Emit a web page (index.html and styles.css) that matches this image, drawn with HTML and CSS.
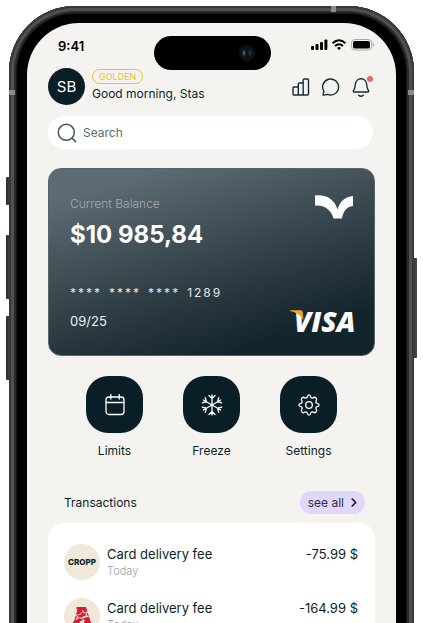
FILE: index.html
```html
<!DOCTYPE html>
<html lang="en">
<head>
<meta charset="utf-8">
<meta name="viewport" content="width=device-width, initial-scale=1">
<title>Wallet</title>
<link rel="stylesheet" href="styles.css">
</head>
<body>
<div class="stage">
  <div class="phone">
    <span class="key key-mute"></span>
    <span class="key key-up"></span>
    <span class="key key-down"></span>
    <span class="key key-power"></span>
    <div class="frame">
      <span class="band band-left"></span>
      <span class="band band-right"></span>
      <span class="band band-top"></span>
      <div class="screen">
        <div class="status">
          <span class="time">9:41</span>
          <div class="island"><span class="lens"></span></div>
          <svg class="status-icons" width="64" height="12" viewBox="0 0 64 12" aria-hidden="true">
            <rect x="0" y="7" width="3" height="4" rx="1"/><rect x="4.500" y="5" width="3" height="6" rx="1"/><rect x="9" y="3" width="3" height="8" rx="1"/><rect x="13.400" y="0.500" width="3" height="10.500" rx="1"/>
            <path d="M21.500 4.200Q28 -1.600 34.500 4.200" fill="none" stroke="#000" stroke-width="2"/>
            <path d="M24 7Q28 3.400 32 7" fill="none" stroke="#000" stroke-width="1.900"/>
            <path d="M26 8.900Q28 7.300 30 8.900L28 11Z"/>
            <rect x="40.500" y="0.500" width="20" height="10.500" rx="3.200" fill="none" stroke="#a9a9a7"/>
            <rect x="42" y="2" width="17" height="7.500" rx="1.800"/>
            <path d="M61.800 3.800Q63.300 4.300 63.300 5.800T61.800 7.800Z" fill="#a9a9a7"/>
          </svg>
        </div>

        <header class="header">
          <div class="avatar">SB</div>
          <div class="greeting">
            <span class="tier">GOLDEN</span>
            <span class="hello">Good morning, Stas</span>
          </div>
          <nav class="tools">
            <button class="tool" type="button" aria-label="Statistics">
              <svg width="20" height="20" viewBox="0 0 20 20"><path d="M2.600 18H16.500Q17.500 18 17.500 17V3Q17.500 2 16.500 2H13.200Q12.200 2 12.200 3V18M12.200 6H8.300Q7.300 6 7.300 7V18M7.300 10H3Q2 10 2 11V17Q2 18 3 18"/></svg>
            </button>
            <button class="tool" type="button" aria-label="Messages">
              <svg width="20" height="20" viewBox="0 0 20 20"><path d="M3 14.500A8 8 0 1 1 6.600 17.400L2.700 18.100Q1.900 18.200 2.100 17.400Z"/></svg>
            </button>
            <button class="tool" type="button" aria-label="Notifications">
              <svg width="20" height="20" viewBox="0 0 20 20"><path d="M10 1.800C6.800 1.800 4.600 4.200 4.400 7.200C4.200 10.500 3.600 11.800 2.500 13.600Q2 15 3.200 15H16.800Q18 15 17.500 13.600C16.400 11.800 15.800 10.500 15.600 7.200C15.400 4.200 13.200 1.800 10 1.800ZM7.700 18.200Q10 20.200 12.300 18.200"/></svg>
              <span class="dot"></span>
            </button>
          </nav>
        </header>

        <label class="search">
          <svg width="20" height="20" viewBox="0 0 20 20" aria-hidden="true"><circle cx="9.300" cy="9.300" r="8"/><path d="M15 15L18.600 18.600"/></svg>
          <input type="search" placeholder="Search" aria-label="Search">
        </label>

        <section class="card">
          <div class="card-row">
            <div>
              <div class="card-label">Current Balance</div>
              <div class="balance">$10 985,84</div>
            </div>
            <svg class="bird" width="38" height="24" viewBox="0 0 38 24" aria-hidden="true"><path d="M0 .5C11 -1 19.500 4 22.500 14.500C25 6 30 2 38 1V11C31.500 11.500 28 17 27 23.500H18.500C17 16 10 9.500 0 10.500Z" fill="#fff"/></svg>
          </div>
          <div class="card-row card-bottom">
            <div>
              <div class="number"><span>****</span> <span>****</span> <span>****</span> <span>1289</span></div>
              <div class="expiry">09/25</div>
            </div>
            <svg class="visa" width="68" height="28" viewBox="0 0 68 28" role="img" aria-label="VISA">
              <text x="4" y="23">VISA</text>
              <path d="M0 1.200H10.500Q12.600 1.200 12.800 3.200L13.500 11.500Q9.500 3.500 0 2Z" fill="#f9a51a"/>
            </svg>
          </div>
        </section>

        <div class="actions">
          <button class="action" type="button">
            <span class="tile"><svg width="22" height="22" viewBox="0 0 22 22"><rect x="2" y="3" width="18" height="17.500" rx="3"/><path d="M2 8.500H20M6.800 .5V5M15.200 .5V5"/></svg></span>
            Limits
          </button>
          <button class="action" type="button">
            <span class="tile"><svg width="22" height="22" viewBox="0 0 22 22"><path d="M11 11V1M8 1.500L11 4.500L14 1.500"/><path d="M11 11V1M8 1.500L11 4.500L14 1.500" transform="rotate(60 11 11)"/><path d="M11 11V1M8 1.500L11 4.500L14 1.500" transform="rotate(120 11 11)"/><path d="M11 11V1M8 1.500L11 4.500L14 1.500" transform="rotate(180 11 11)"/><path d="M11 11V1M8 1.500L11 4.500L14 1.500" transform="rotate(240 11 11)"/><path d="M11 11V1M8 1.500L11 4.500L14 1.500" transform="rotate(300 11 11)"/></svg></span>
            Freeze
          </button>
          <button class="action" type="button">
            <span class="tile"><svg width="22" height="22" viewBox="0 0 22 22"><circle cx="11" cy="11" r="3.300"/><path d="M9.300 3C9.600 .2 12.400 .2 12.700 3C13 4 14 4.400 15 3.900C17.100 2.200 19.800 4.900 18.100 7C17.600 8 18 9 19 9.300C21.800 9.600 21.800 12.400 19 12.700C18 13 17.600 14 18.100 15C19.800 17.100 17.100 19.800 15 18.100C14 17.600 13 18 12.700 19C12.400 21.800 9.600 21.800 9.300 19C9 18 8 17.600 7 18.100C4.900 19.800 2.200 17.100 3.900 15C4.400 14 4 13 3 12.700C.2 12.400 .2 9.600 3 9.300C4 9 4.400 8 3.900 7C2.200 4.900 4.900 2.200 7 3.900C8 4.400 9 4 9.300 3Z"/></svg></span>
            Settings
          </button>
        </div>

        <div class="section-head">
          <h2>Transactions</h2>
          <a class="see-all" href="#all">see all <svg width="6" height="9" viewBox="0 0 6 9" aria-hidden="true"><path d="M1.200 1L4.700 4.500L1.200 8"/></svg></a>
        </div>

        <ul class="list">
          <li class="item">
            <span class="logo cropp">CROPP</span>
            <div class="what"><div class="title">Card delivery fee</div><div class="when">Today</div></div>
            <span class="amount">-75.99 $</span>
          </li>
          <li class="item">
            <span class="logo"><svg width="20" height="20" viewBox="0 0 20 20" aria-hidden="true"><path d="M4.500 1H14L18.500 15.500H19V17.500H12V15.500H12.800L12.200 13L8 15.500L7.500 17.500H1V15.500H2L5.500 3.500H4.500Z" fill="#d51c35"/><path d="M9.500 6.500L11 3.500L12.200 6.500L17 5L14.500 8.500L17 11L13 11.500L10 13L7 12L3.500 14.500L5 10.500L2.500 9L7 8.500Z" fill="#f0e9da"/><path d="M4 9.500L8 9L10 7L11 5L11.700 7.500L15 6.500L13 8.700L14.800 10.200L11.500 10L9.500 12L7.500 11L5.500 12.500L6.500 10.500Z" fill="#d51c35"/></svg></span>
            <div class="what"><div class="title">Card delivery fee</div><div class="when">Today</div></div>
            <span class="amount">-164.99 $</span>
          </li>
        </ul>
      </div>
    </div>
  </div>
</div>
</body>
</html>
```
FILE: styles.css
```css
* { box-sizing: border-box; }

:root {
  --ink: #0a1f28;
  --paper: #f4f3ef;
}

body {
  margin: 0;
  background: #fff;
  color: var(--ink);
  font-family: "Inter", "Liberation Sans", sans-serif;
  font-size: 13px;
  line-height: 18px;
}

button {
  border: 0;
  padding: 0;
  background: none;
  color: inherit;
  font: inherit;
}

svg { display: block; }

.stage {
  height: 100vh;
  overflow: hidden;
  padding: 6px 9px 0;
}

.phone { position: relative; }

.frame {
  position: relative;
  padding: 17px 18px 40px;
  border-radius: 66px 66px 0 0;
  background: #000;
  box-shadow: inset 0 0 0 2px #3a3937, inset 0 0 0 5px #50504d, inset 0 0 0 7px #2b2a29, inset 0 0 0 8px #161616;
}

.key {
  position: absolute;
  width: 5px;
  border-radius: 1px;
  background: linear-gradient(90deg, #2c2b29, #4d4b48);
}
.key-mute { left: -3px; top: 171px; height: 28px; }
.key-up { left: -3px; top: 229px; height: 64px; }
.key-down { left: -3px; top: 310px; height: 64px; }
.key-power { right: -3px; top: 252px; height: 100px; }

.band { position: absolute; background: #8b8a87; }
.band-left { left: 0; top: 84px; width: 6px; height: 5px; }
.band-right { right: 0; top: 84px; width: 6px; height: 5px; }
.band-top { right: 78px; top: 0; width: 5px; height: 6px; }

.screen {
  padding: 13px 21px 24px;
  border-radius: 52px 52px 0 0;
  background: var(--paper);
}

.status {
  position: relative;
  display: flex;
  justify-content: space-between;
  align-items: center;
  height: 20px;
  padding: 0 0 0 10px;
}
.time { font-weight: 600; color: #000; }
.status-icons { margin-bottom: 2px; }

.island {
  position: absolute;
  left: 50%;
  top: 0;
  width: 117px;
  height: 34px;
  margin-left: -58px;
  border-radius: 17px;
  background: #000;
}
.lens {
  position: absolute;
  right: 16px;
  top: 9px;
  width: 16px;
  height: 16px;
  border-radius: 50%;
  background:
    radial-gradient(ellipse 2px 4px at 5px 8px, #3f8583, transparent),
    radial-gradient(ellipse 2px 4px at 11px 8px, #28398a, transparent),
    #101114;
}

.header {
  display: flex;
  align-items: center;
  gap: 7px;
  margin-top: 12px;
}
.avatar {
  width: 37px;
  height: 37px;
  border-radius: 50%;
  background: #091e27;
  color: #fff;
  font-size: 15px;
  line-height: 37px;
  text-align: center;
}
.greeting { display: grid; justify-items: start; flex: 1; }
.tier {
  padding: 0 6px;
  border: 1px solid #edc030;
  border-radius: 8px;
  color: #edc030;
  font-size: 9px;
  line-height: 13px;
}
.hello { font-size: 12px; line-height: 20px; white-space: nowrap; }
.tools { display: flex; gap: 10px; padding-right: 4px; }
.tool { position: relative; }
.tool svg { fill: none; stroke: #152c36; stroke-width: 1.400; stroke-linecap: round; stroke-linejoin: round; }
.dot {
  position: absolute;
  right: -2px;
  top: -1px;
  width: 6px;
  height: 6px;
  border-radius: 50%;
  background: #ea6868;
}

.search {
  display: flex;
  align-items: center;
  gap: 6px;
  height: 33px;
  margin: 11px 2px 0 0;
  padding: 0 9px;
  border-radius: 17px;
  background: #fff;
}
.search svg { fill: none; stroke: #45565f; stroke-width: 1.500; stroke-linecap: round; }
.search input {
  flex: 1;
  min-width: 0;
  border: 0;
  padding: 0;
  outline: 0;
  background: none;
  color: var(--ink);
  font: inherit;
  font-size: 12px;
}
.search input::placeholder { color: #5b6a71; opacity: 1; }

.card {
  display: flex;
  flex-direction: column;
  justify-content: space-between;
  min-height: 188px;
  margin-top: 19px;
  padding: 26px 16px 18px 21px;
  border: 1px solid #55646c;
  border-radius: 13px;
  background: linear-gradient(163deg, #5c6a73 12%, #3a4850 45%, #14242b 84%);
  color: #fff;
}
.card-row { display: flex; justify-content: space-between; align-items: flex-start; }
.card-bottom { align-items: flex-end; }
.card-label { color: #a3abb0; font-size: 12px; font-weight: 300; }
.balance { margin-top: 6px; font-size: 24px; line-height: 32px; font-weight: 700; white-space: nowrap; }
.bird { margin-right: 5px; }
.number {
  display: flex;
  gap: 7px;
  color: #e4e7e8;
  font-size: 12px;
  letter-spacing: 2px;
}
.expiry { margin: 10px 0 7px; color: #eef0f1; }
.visa text {
  fill: #fff;
  font-family: "Open Sans", "Noto Sans", sans-serif;
  font-size: 28px;
  font-style: italic;
  font-weight: 800;
}

.actions {
  display: flex;
  justify-content: center;
  gap: 40px;
  margin-top: 20px;
}
.action { display: grid; justify-items: center; gap: 9px; width: 57px; font-size: 12px; }
.tile {
  display: grid;
  place-items: center;
  width: 57px;
  height: 57px;
  border-radius: 22px;
  background: #091e27;
}
.tile svg { fill: none; stroke: #fff; stroke-width: 1.300; stroke-linecap: round; stroke-linejoin: round; }

.section-head {
  display: flex;
  justify-content: space-between;
  align-items: center;
  margin-top: 31px;
  padding: 0 10px 0 16px;
}
h2 { margin: 0; font-size: 12px; font-weight: 400; }
.see-all {
  display: flex;
  align-items: center;
  gap: 7px;
  height: 23px;
  padding: 0 8px;
  border-radius: 12px;
  background: #e2d6fe;
  color: #26333f;
  font-size: 12px;
  text-decoration: none;
}
.see-all svg { fill: none; stroke: #0a1f28; stroke-width: 1.700; stroke-linecap: round; stroke-linejoin: round; }

.list {
  display: grid;
  gap: 18px;
  margin: 9px 0 0;
  padding: 21px 17px 21px 16px;
  border-radius: 16px;
  background: #fff;
  list-style: none;
}
.item { display: flex; gap: 7px; }
.logo {
  display: grid;
  place-items: center;
  width: 36px;
  height: 36px;
  border-radius: 50%;
  background: #f0e9da;
}
.cropp { font-size: 8px; font-weight: 800; }
.what { flex: 1; padding-top: 1px; }
.when { color: #98a2a8; font-size: 11px; font-weight: 300; line-height: 16px; }
.amount { padding-top: 1px; }
```
